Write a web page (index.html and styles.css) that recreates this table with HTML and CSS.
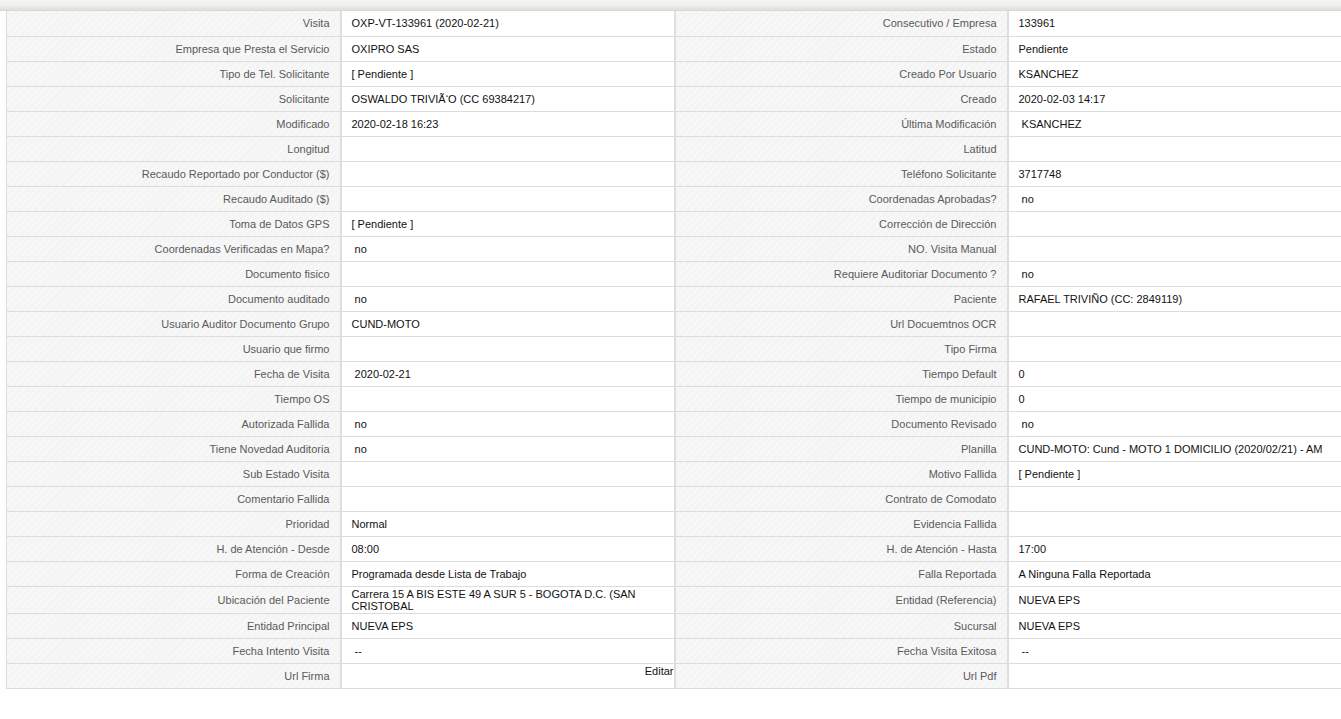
FILE: index.html
```html
<!DOCTYPE html>
<html>
<head>
    <meta charset="UTF-8">
    <meta name="viewport" content="width=device-width, initial-scale=1.0">
    <title>Visita</title>
    <link rel="stylesheet" href="styles.css">
</head>
<body>
    <div class="top-bar"></div>
    <table class="detail">
        <colgroup>
            <col class="c-label">
            <col class="c-value">
            <col class="c-label2">
            <col class="c-value2">
        </colgroup>
        <tr>
            <td class="label">Visita</td><td class="value">OXP-VT-133961 (2020-02-21)</td>
            <td class="label">Consecutivo / Empresa</td><td class="value">133961</td>
        </tr>
        <tr>
            <td class="label">Empresa que Presta el Servicio</td><td class="value">OXIPRO SAS</td>
            <td class="label">Estado</td><td class="value">Pendiente</td>
        </tr>
        <tr>
            <td class="label">Tipo de Tel. Solicitante</td><td class="value">[ Pendiente ]</td>
            <td class="label">Creado Por Usuario</td><td class="value">KSANCHEZ</td>
        </tr>
        <tr>
            <td class="label">Solicitante</td><td class="value">OSWALDO TRIVIÃ‘O (CC 69384217)</td>
            <td class="label">Creado</td><td class="value">2020-02-03 14:17</td>
        </tr>
        <tr>
            <td class="label">Modificado</td><td class="value">2020-02-18 16:23</td>
            <td class="label">Última Modificación</td><td class="value">&nbsp;KSANCHEZ</td>
        </tr>
        <tr>
            <td class="label">Longitud</td><td class="value"></td>
            <td class="label">Latitud</td><td class="value"></td>
        </tr>
        <tr>
            <td class="label">Recaudo Reportado por Conductor ($)</td><td class="value"></td>
            <td class="label">Teléfono Solicitante</td><td class="value">3717748</td>
        </tr>
        <tr>
            <td class="label">Recaudo Auditado ($)</td><td class="value"></td>
            <td class="label">Coordenadas Aprobadas?</td><td class="value">&nbsp;no</td>
        </tr>
        <tr>
            <td class="label">Toma de Datos GPS</td><td class="value">[ Pendiente ]</td>
            <td class="label">Corrección de Dirección</td><td class="value"></td>
        </tr>
        <tr>
            <td class="label">Coordenadas Verificadas en Mapa?</td><td class="value">&nbsp;no</td>
            <td class="label">NO. Visita Manual</td><td class="value"></td>
        </tr>
        <tr>
            <td class="label">Documento fisico</td><td class="value"></td>
            <td class="label">Requiere Auditoriar Documento ?</td><td class="value">&nbsp;no</td>
        </tr>
        <tr>
            <td class="label">Documento auditado</td><td class="value">&nbsp;no</td>
            <td class="label">Paciente</td><td class="value">RAFAEL TRIVIÑO (CC: 2849119)</td>
        </tr>
        <tr>
            <td class="label">Usuario Auditor Documento Grupo</td><td class="value">CUND-MOTO</td>
            <td class="label">Url Docuemtnos OCR</td><td class="value"></td>
        </tr>
        <tr>
            <td class="label">Usuario que firmo</td><td class="value"></td>
            <td class="label">Tipo Firma</td><td class="value"></td>
        </tr>
        <tr>
            <td class="label">Fecha de Visita</td><td class="value">&nbsp;2020-02-21</td>
            <td class="label">Tiempo Default</td><td class="value">0</td>
        </tr>
        <tr>
            <td class="label">Tiempo OS</td><td class="value"></td>
            <td class="label">Tiempo de municipio</td><td class="value">0</td>
        </tr>
        <tr>
            <td class="label">Autorizada Fallida</td><td class="value">&nbsp;no</td>
            <td class="label">Documento Revisado</td><td class="value">&nbsp;no</td>
        </tr>
        <tr>
            <td class="label">Tiene Novedad Auditoria</td><td class="value">&nbsp;no</td>
            <td class="label">Planilla</td><td class="value">CUND-MOTO: Cund - MOTO 1 DOMICILIO (2020/02/21) - AM</td>
        </tr>
        <tr>
            <td class="label">Sub Estado Visita</td><td class="value"></td>
            <td class="label">Motivo Fallida</td><td class="value">[ Pendiente ]</td>
        </tr>
        <tr>
            <td class="label">Comentario Fallida</td><td class="value"></td>
            <td class="label">Contrato de Comodato</td><td class="value"></td>
        </tr>
        <tr>
            <td class="label">Prioridad</td><td class="value">Normal</td>
            <td class="label">Evidencia Fallida</td><td class="value"></td>
        </tr>
        <tr>
            <td class="label">H. de Atención - Desde</td><td class="value">08:00</td>
            <td class="label">H. de Atención - Hasta</td><td class="value">17:00</td>
        </tr>
        <tr>
            <td class="label">Forma de Creación</td><td class="value">Programada desde Lista de Trabajo</td>
            <td class="label">Falla Reportada</td><td class="value">A Ninguna Falla Reportada</td>
        </tr>
        <tr class="tall">
            <td class="label">Ubicación del Paciente</td><td class="value wrap">Carrera 15 A BIS ESTE 49 A SUR 5 - BOGOTA D.C. (SAN CRISTOBAL</td>
            <td class="label">Entidad (Referencia)</td><td class="value">NUEVA EPS</td>
        </tr>
        <tr>
            <td class="label">Entidad Principal</td><td class="value">NUEVA EPS</td>
            <td class="label">Sucursal</td><td class="value">NUEVA EPS</td>
        </tr>
        <tr>
            <td class="label">Fecha Intento Visita</td><td class="value">&nbsp;--</td>
            <td class="label">Fecha Visita Exitosa</td><td class="value">&nbsp;--</td>
        </tr>
        <tr>
            <td class="label">Url Firma</td><td class="value edit-cell"><span class="edit">Editar</span></td>
            <td class="label">Url Pdf</td><td class="value"></td>
        </tr>
    </table>
</body>
</html>
```

FILE: styles.css
```css
* {
    padding: 0;
    margin: 0;
    box-sizing: border-box;
}
body {
    background: #fff;
    font-family: "Liberation Sans", Arial, sans-serif;
    font-size: 11px;
}
.top-bar {
    height: 11px;
    background: linear-gradient(#f4f4f2 0%, #f0f0ed 45%, #e2e2dc 85%, #d6d6d0 100%);
}
.detail {
    margin-left: 6px;
    width: 1335px;
    table-layout: fixed;
    border-collapse: collapse;
    border-left: 1px solid #dcdcdc;
    border-right: 1px solid #dcdcdc;
}
.c-label { width: 334px; }
.c-value { width: 334px; }
.c-label2 { width: 333px; }
.c-value2 { width: 334px; }
.detail td {
    height: 25px;
    border-bottom: 1px solid #dcdcdc;
    border-right: 2px solid #dedede;
    vertical-align: middle;
    white-space: nowrap;
    overflow: hidden;
}
.detail td:last-child {
    border-right: 0;
}
.label {
    text-align: right;
    padding-right: 10px;
    color: #5a5a5a;
    background-color: #f4f4f4;
    background-image: repeating-linear-gradient(-45deg, #f4f4f4 0, #f4f4f4 3px, #f8f8f8 3px, #f8f8f8 5px);
}
.value {
    padding-left: 10px;
    color: #111;
    background: #fff;
}
.tall td {
    height: 27px;
}
.value.wrap {
    white-space: normal;
    line-height: 12px;
    padding-right: 12px;
}
.edit-cell {
    vertical-align: top !important;
    text-align: right;
    padding-left: 0;
}
.edit {
    display: block;
    color: #111;
    line-height: 12px;
    padding-top: 1px;
}
```
